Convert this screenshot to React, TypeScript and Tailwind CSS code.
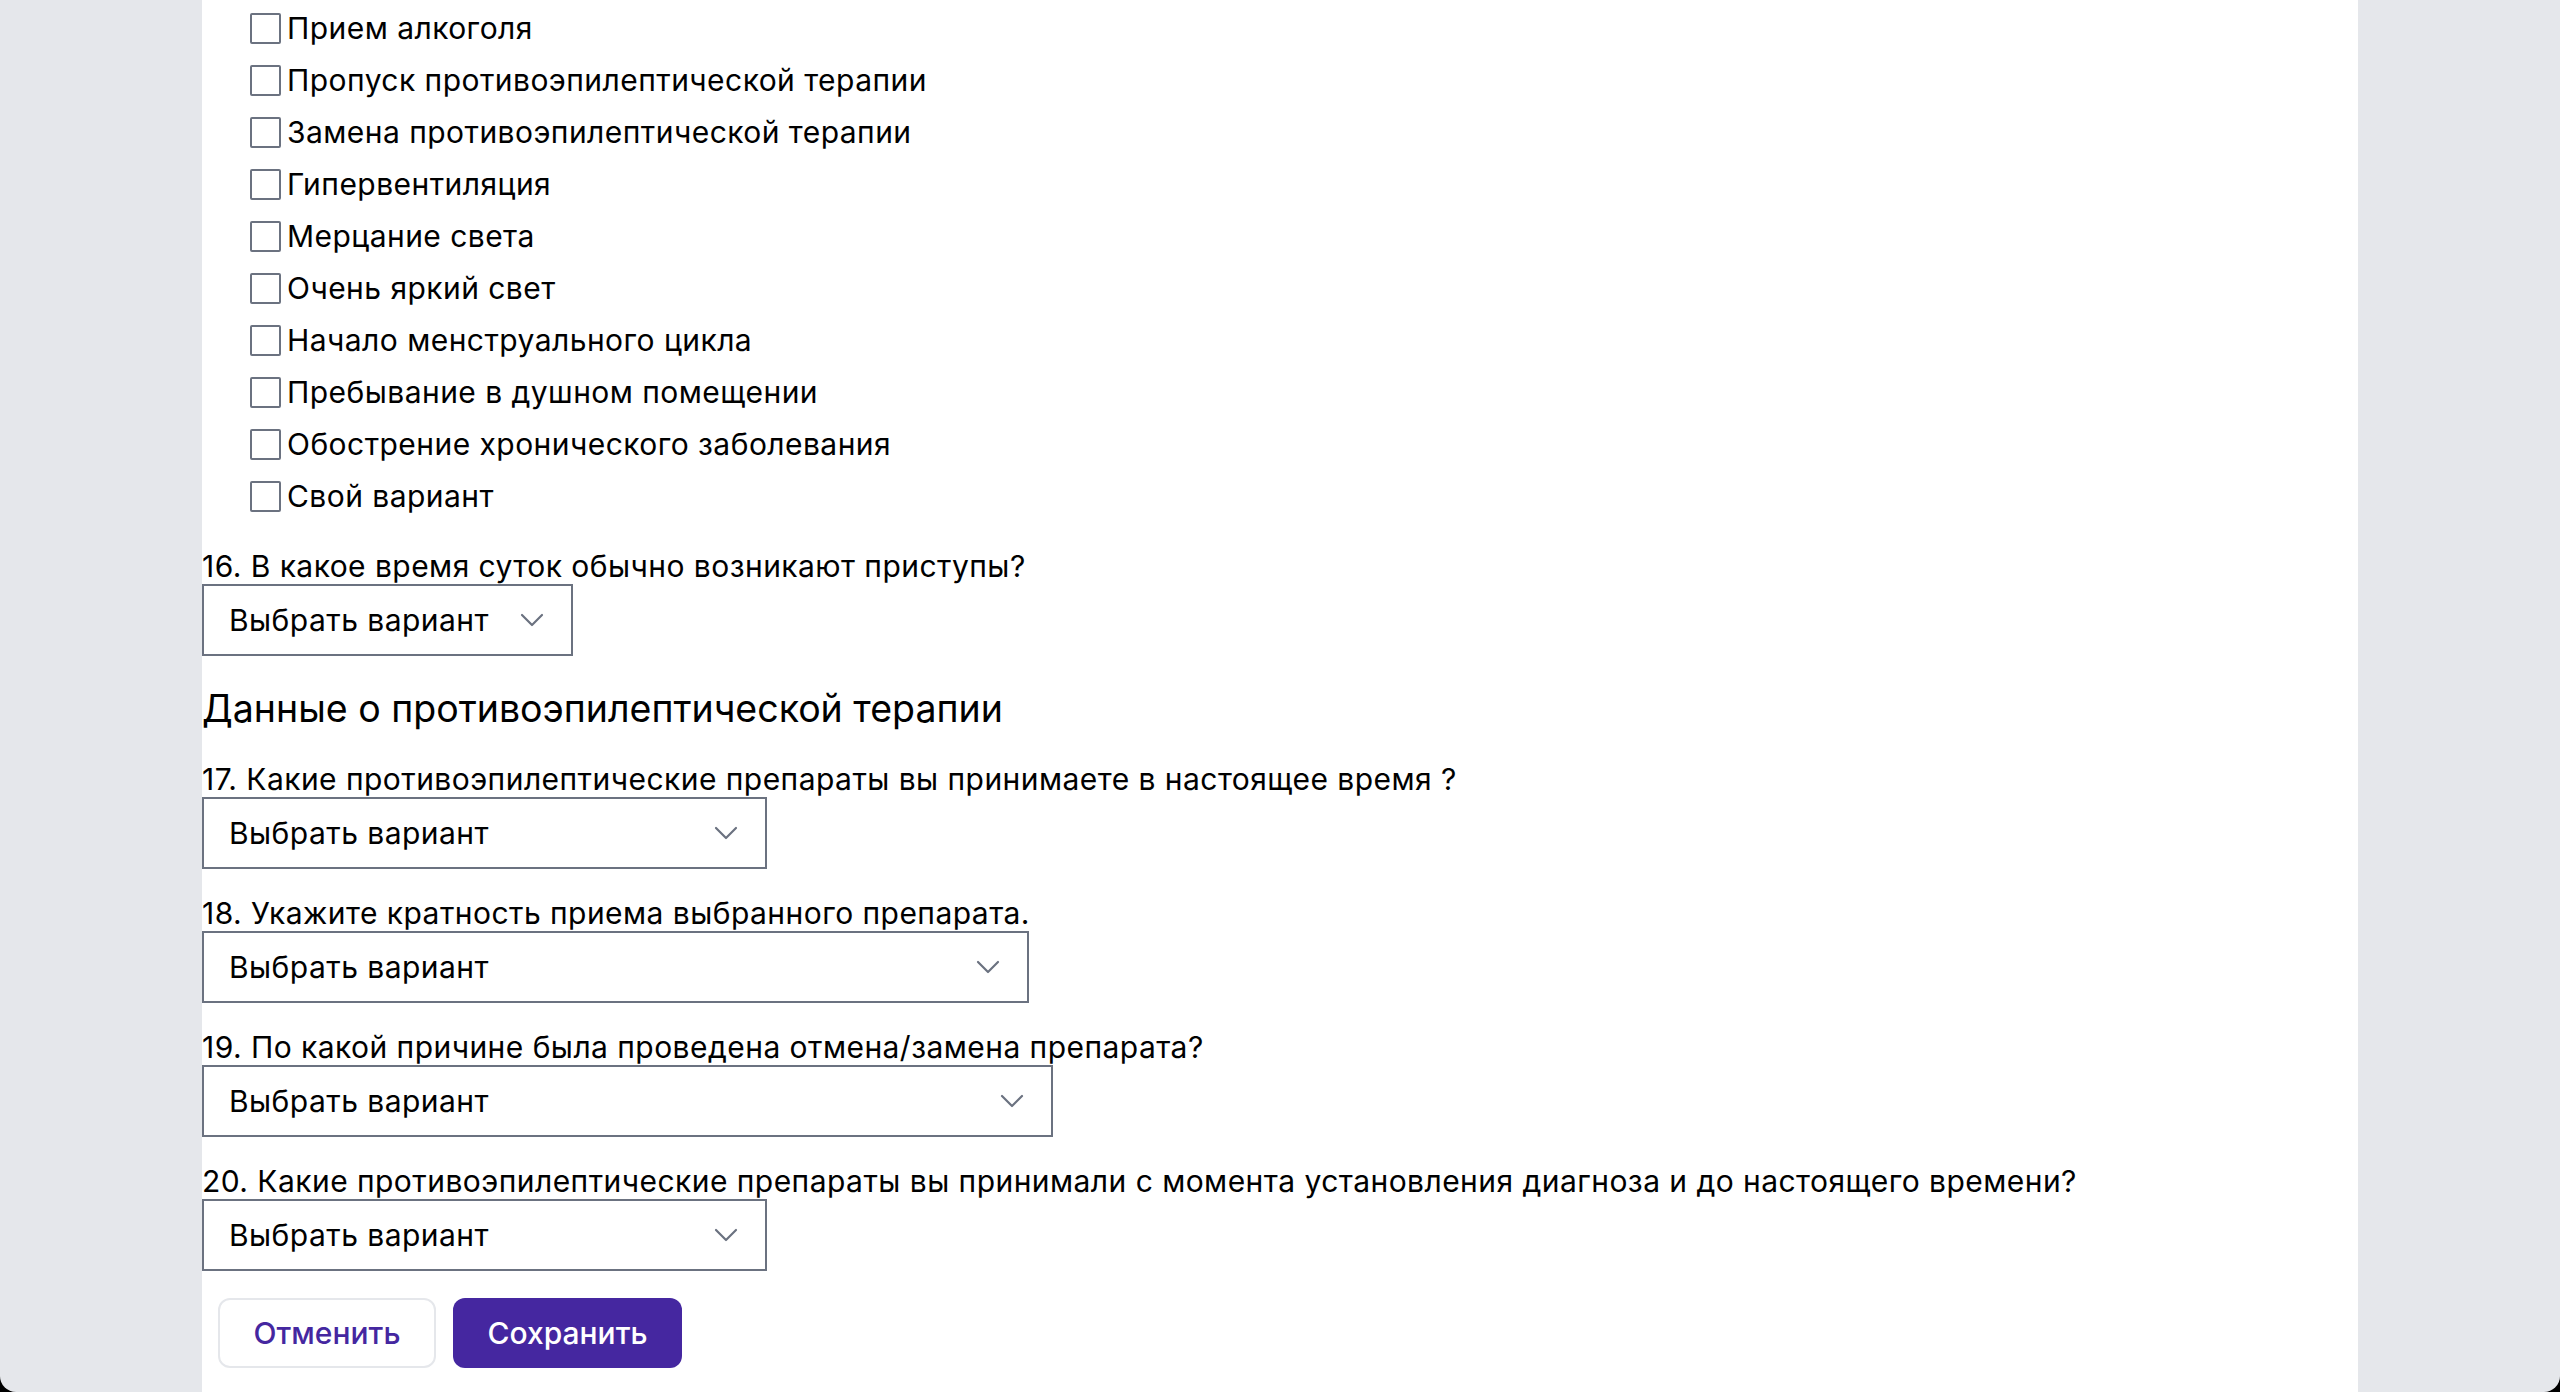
const TRIGGERS = [
  'Прием алкоголя',
  'Пропуск противоэпилептической терапии',
  'Замена противоэпилептической терапии',
  'Гипервентиляция',
  'Мерцание света',
  'Очень яркий свет',
  'Начало менструального цикла',
  'Пребывание в душном помещении',
  'Обострение хронического заболевания',
  'Свой вариант',
]

function Chevron() {
  return (
    <svg width="24" height="14" viewBox="0 0 24 14" fill="none" className="shrink-0">
      <path d="M2 2l10 10 10-10" stroke="#6b7280" strokeWidth="2.2" strokeLinecap="round" strokeLinejoin="round" />
    </svg>
  )
}

function Select({ width }: { width: string }) {
  return (
    <button
      type="button"
      className={`flex h-[72px] items-center justify-between border-2 border-[#6b7280] bg-white pl-[25px] pr-[27px] text-[30px] tracking-[0.45px] text-black ${width}`}
    >
      <span>Выбрать вариант</span>
      <Chevron />
    </button>
  )
}

function Question({ label, width, className = 'mt-[26px]' }: { label: string; width: string; className?: string }) {
  return (
    <div className={`flex flex-col items-start ${className}`}>
      <label className="text-[30px] leading-[36px] tracking-[0.45px] text-black">{label}</label>
      <Select width={width} />
    </div>
  )
}

export default function App() {
  return (
    <div className="h-[1392px] overflow-hidden bg-black" style={{ fontFamily: 'Inter, "Noto Sans", sans-serif' }}>
      <div className="flex h-full justify-center rounded-b-[16px] bg-[#e5e7eb]">
        <div className="flex w-[2156px] flex-col bg-white pt-[13px]">
          {/* триггеры приступов */}
          <div className="flex flex-col gap-[21px] pl-[48px]">
            {TRIGGERS.map(t => (
              <label key={t} className="flex h-[31px] items-center gap-[6px] text-[30px] tracking-[0.45px] text-black">
                <span className="h-[31px] w-[31px] shrink-0 rounded-[2px] border-2 border-[#6b7280] bg-white" />
                {t}
              </label>
            ))}
          </div>

          <Question
            className="mt-[36px]"
            label="16. В какое время суток обычно возникают приступы?"
            width="w-[371px]"
          />

          <h2 className="mt-[29px] text-[37.5px] leading-[48px] text-black">
            Данные о противоэпилептической терапии
          </h2>

          <Question
            className="mt-[28px]"
            label="17. Какие противоэпилептические препараты вы принимаете в настоящее время ?"
            width="w-[565px]"
          />
          <Question label="18. Укажите кратность приема выбранного препарата." width="w-[827px]" />
          <Question label="19. По какой причине была проведена отмена/замена препарата?" width="w-[851px]" />
          <Question
            label="20. Какие противоэпилептические препараты вы принимали с момента установления диагноза и до настоящего времени?"
            width="w-[565px]"
          />

          <div className="mt-[27px] flex gap-[17px] pl-[16px]">
            <button
              type="button"
              className="h-[70px] w-[218px] rounded-[12px] border-2 border-[#e5e7eb] bg-white text-[30px] font-medium text-[#4527a0]"
            >
              Отменить
            </button>
            <button
              type="button"
              className="h-[70px] w-[229px] rounded-[12px] bg-[#4527a0] text-[30px] font-medium text-white"
            >
              Сохранить
            </button>
          </div>
        </div>
      </div>
    </div>
  )
}
